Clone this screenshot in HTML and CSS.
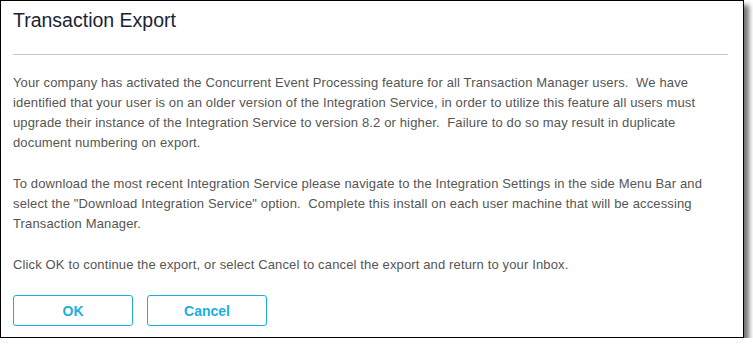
FILE: index.html
```html
<!DOCTYPE html>
<html>
<head>
<meta charset="utf-8">
<link rel="stylesheet" href="styles.css">
</head>
<body>
<div class="dialog">
  <h1 class="title">Transaction Export</h1>
  <hr class="sep">
  <div class="content">
    <p>Your company has activated the Concurrent Event Processing feature for all Transaction Manager users.&nbsp; We have identified that your user is on an older version of the Integration Service, in order to utilize this feature all users must upgrade their instance of the Integration Service to version 8.2 or higher.&nbsp; Failure to do so may result in duplicate document numbering on export.</p>
    <p>To download the most recent Integration Service please navigate to the Integration Settings in the side Menu Bar and select the "Download Integration Service" option.&nbsp; Complete this install on each user machine that will be accessing Transaction Manager.</p>
    <p>Click OK to continue the export, or select Cancel to cancel the export and return to your Inbox.</p>
  </div>
  <div class="actions">
    <button class="btn">OK</button>
    <button class="btn">Cancel</button>
  </div>
</div>
</body>
</html>
```
FILE: styles.css
```css
html, body {
  margin: 0;
  padding: 0;
  background: #fff;
}
.dialog {
  box-sizing: border-box;
  width: 744px;
  height: 338px;
  border: 1px solid #000;
  background: #fff;
  box-shadow: 5px 5px 5px rgba(0, 0, 0, 0.55);
  padding: 0 15px 0 12px;
  font-family: "Liberation Sans", Arial, sans-serif;
}
.title {
  margin: 0;
  padding-top: 6px;
  height: 30px;
  font-size: 19.5px;
  font-weight: normal;
  color: #1b2333;
  line-height: 26px;
}
.sep {
  margin: 17px 0 0 0;
  border: 0;
  border-top: 1px solid #c8c8c8;
  height: 0;
}
.content {
  padding-top: 18px;
  padding-right: 15px;
  font-size: 13px;
  letter-spacing: 0.14px;
  line-height: 20px;
  color: #555;
}
.content p {
  margin: 0 0 21px 0;
}
.actions {
  display: flex;
  gap: 14px;
  margin-top: -1px;
}
.btn {
  width: 120px;
  height: 31px;
  background: #fff;
  border: 1px solid #1aafe0;
  border-radius: 3px;
  color: #1aafe0;
  font-family: "Liberation Sans", Arial, sans-serif;
  font-weight: bold;
  font-size: 14px;
  padding: 0;
}
```
